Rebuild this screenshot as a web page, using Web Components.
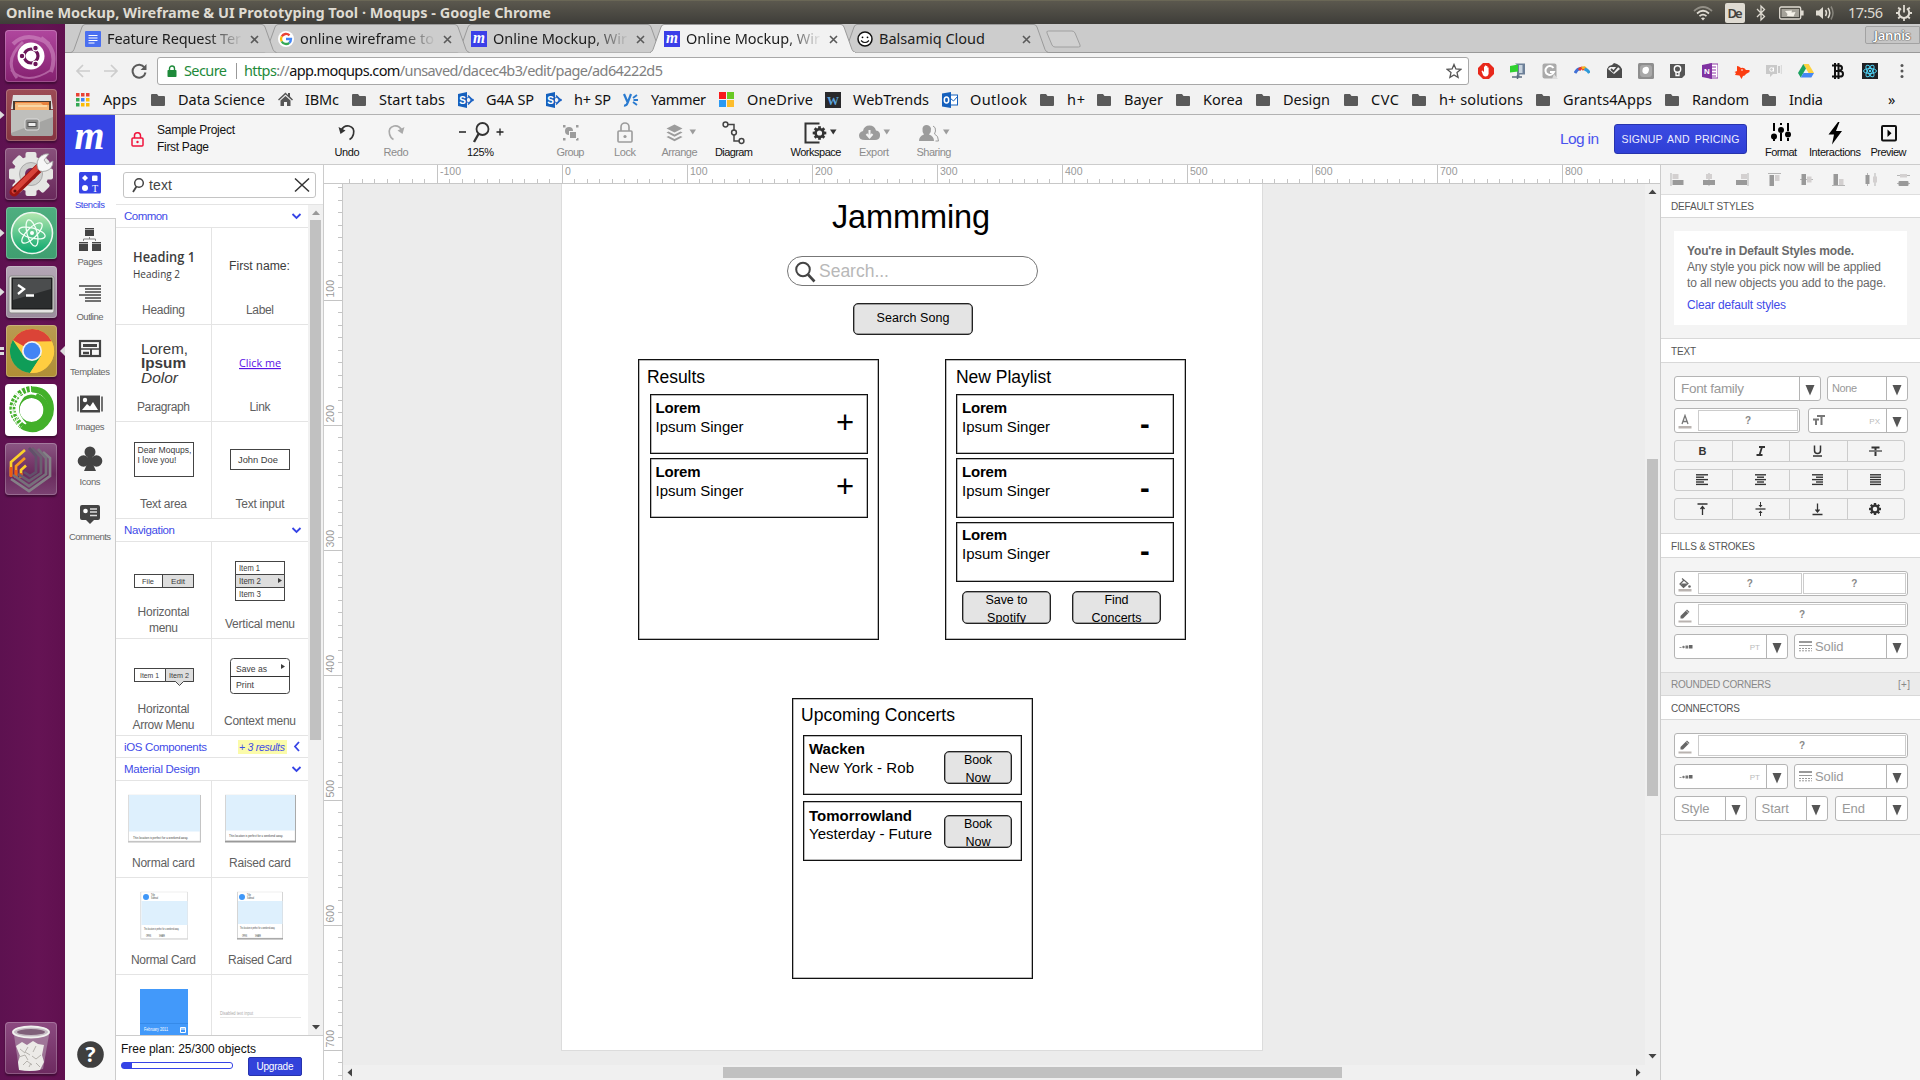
<!DOCTYPE html>
<html lang="en">
<head>
<meta charset="utf-8">
<title>Online Mockup, Wireframe &amp; UI Prototyping Tool · Moqups</title>
<style>
html,body{margin:0;padding:0;width:1920px;height:1080px;overflow:hidden;background:#f4f4f4;font-family:"Liberation Sans",Arial,sans-serif;font-size:12px;color:#222}
desktop-shell{width:1920px;height:1080px}
</style>
</head>
<body>
<desktop-shell></desktop-shell>
<script>
const fitted = [];
const UB = `font-family:'Noto Sans','Open Sans',sans-serif`;
const T = (w, s, css = '') => `<fit-text w="${w}" style="${css}">${s}</fit-text>`;
const S = (w, h, inner, attrs = '') => `<svg width="${w}" height="${h}" viewBox="0 0 ${w} ${h}" ${attrs}>${inner}</svg>`;

function define(name, css, html) {
  customElements.define(name, class extends HTMLElement {
    constructor() {
      super();
      const root = this.attachShadow({ mode: 'open' });
      const t = document.createElement('template');
      t.innerHTML = `<style>*{box-sizing:border-box}:host{display:block;box-sizing:border-box}svg{display:block;flex:none}${css}</style>` +
        (typeof html === 'function' ? html(this) : html);
      root.append(t.content.cloneNode(true));
    }
  });
}

/* Single line of text, tracked so that it fills the given width. */
customElements.define('fit-text', class extends HTMLElement {
  constructor() {
    super();
    this.attachShadow({ mode: 'open' }).innerHTML =
      '<style>:host{display:block;white-space:nowrap;flex:none}span{display:inline-block;white-space:pre}</style><span><slot></slot></span>';
    fitted.push(this);
  }
  fit() {
    const w = parseFloat(this.getAttribute('w'));
    if (!w) return;
    const span = this.shadowRoot.querySelector('span');
    const n = this.textContent.length - 1;
    const nat = span.getBoundingClientRect().width;
    this.style.width = w + 'px';
    if (n > 0) span.style.letterSpacing = ((w - nat) / n).toFixed(3) + 'px';
  }
});

/* ---------- system bar ---------- */
define('os-bar', `
:host{height:24px;background:linear-gradient(#5b584e,#3e3d39);border-top:1px solid #6a6756;color:#dfdbd2;display:flex;align-items:center;padding:0 0 0 6px;${UB}}
.r{margin-left:auto;display:flex;align-items:center;height:24px}
.de{width:20px;height:20px;border-radius:2px;background:#dfdbd2;color:#45433d;display:flex;align-items:center;justify-content:center;font-weight:600;font-size:13px}
`, `${T(545, 'Online Mockup, Wireframe &amp; UI Prototyping Tool · Moqups - Google Chrome', 'font-size:14.5px;font-weight:700;line-height:22px;margin-top:-1px')}
<div class="r">
${S(20, 20, `<g fill="none" stroke="#dfdbd2" stroke-width="1.7"><path d="M1 8Q10 0 19 8" opacity=".45"/><path d="M4 10.5Q10 5 16 10.5"/><path d="M6.5 13.2Q10 10 13.5 13.2"/></g><path d="M8 15.2Q10 13.6 12 15.2L10 17.5Z" fill="#dfdbd2"/>`)}
<span style="width:12px"></span><span class="de">${T(15, 'De')}</span><span style="width:10px"></span>
${S(12, 18, `<path d="M2 5L9.500 12.500L6 16V2L9.500 5.500L2 13" fill="none" stroke="#dfdbd2" stroke-width="1.3"/>`)}
<span style="width:12px"></span>
${S(25, 14, `<rect x=".7" y="1" width="21" height="12" rx="1.500" fill="none" stroke="#dfdbd2" stroke-width="1.3"/><rect x="22" y="4.500" width="2.600" height="5" fill="#dfdbd2"/><rect x="2.500" y="3" width="17.500" height="8" fill="#a5a299"/><path d="M6 5l7-.5-.5 2 4-.5-2 4.500-6.500-.5.5-2z" fill="#f4f1e8"/>`)}
<span style="width:11px"></span>
${S(20, 18, `<path d="M1 6.500h3l4-3.500v12l-4-3.500H1z" fill="#dfdbd2"/><g fill="none" stroke="#dfdbd2" stroke-width="1.500"><path d="M10.500 6q2 3 0 6"/><path d="M13 4q3.500 5 0 10"/><path d="M16 2.500q4 6.500 0 13" opacity=".4"/></g>`)}
<span style="width:13px"></span>${T(35, '17:56', 'font-size:14.500px;line-height:22px;margin-top:-1px')}<span style="width:13px"></span>
${S(16, 17, `<g fill="none" stroke="#dfdbd2"><path d="M5 4.500a5.200 5.200 0 1 0 6 0" stroke-width="2"/><path d="M8 1v7.500" stroke-width="1.800"/><path d="M0 9h2.500M13.500 9H16M2.200 14.500l1.800-1.800M13.800 14.500L12 12.700M8 14v3M2.200 3.500L4 5.300M13.800 3.500L12 5.300" stroke-width="1.800"/></g>`)}
<span style="width:8px"></span></div>`);

/* ---------- launcher ---------- */
const L = {
ubuntu: ['linear-gradient(#b0479e,#84206f)', `<g fill="none" stroke="#d79bcb" opacity=".5"><path d="M8 14Q22 0 44 14" stroke-width="4"/><path d="M12 48Q-2 30 18 12" stroke-width="3"/><path d="M46 42Q54 20 36 8" stroke-width="4"/><path d="M6 40q16 16 40 0" stroke-width="2"/></g><circle cx="26" cy="26" r="13.500" fill="#fff"/><circle cx="26" cy="26" r="7" fill="none" stroke="#6b1559" stroke-width="3.200"/><g fill="#6b1559" stroke="#fff" stroke-width="1.200"><circle cx="17" cy="26" r="2.800"/><circle cx="30.500" cy="18" r="2.800"/><circle cx="30.500" cy="34" r="2.800"/></g>`],
files: ['linear-gradient(#9c4b55,#853540)', `<path d="M7 6h38l2 14H5z" fill="#dcdcdc"/><path d="M7 12h38v12H7z" fill="#4b3b32"/><path d="M9 13h34v9H9z" fill="#e9813c"/><path d="M11 14h24l2 2h6v6H9v-7z" fill="#f7b778"/><path d="M12 17h29" stroke="#fbe2b5" stroke-width="1.500"/><path d="M5 21h42v24q0 2-2 2H7q-2 0-2-2z" fill="#a5a5a3"/><path d="M5 21h42v7L5 44z" fill="#bfbfbc"/><rect x="19" y="30" width="14" height="11" rx="2" fill="#8b8b89" stroke="#ddd"/><rect x="22" y="33.500" width="8" height="4" fill="#eee" stroke="#555"/>`],
settings: ['linear-gradient(#88507b,#69285b)', `<g transform="translate(26 26)"><g fill="#e6e6e4">${[0,45,90,135].map(a=>`<rect x="-5.500" y="-22" width="11" height="44" rx="2" transform="rotate(${a})"/>`).join('')}<circle r="17.500"/></g><circle r="11.500" fill="#cfcfcd" stroke="#aaa"/><circle r="6" fill="#712c61"/></g><path d="M9 44L34 20" stroke="#9d1512" stroke-width="9" stroke-linecap="round"/><path d="M9 43L33 19" stroke="#d8433a" stroke-width="5" stroke-linecap="round"/><path d="M33 21q-3-8 3-13 4-3 8-2l-5 6 3 4 6-3q0 8-7 10-4 1-6 0z" fill="#f6f6f6" stroke="#999" stroke-width=".8"/><circle cx="10" cy="43" r="1.600" fill="#5c0d0b"/>`],
atom: ['linear-gradient(#4fae80,#3f9f70)', `<defs><linearGradient id="ag" x2="0" y2="1"><stop offset="0" stop-color="#b5e8b0"/><stop offset="1" stop-color="#08a66c"/></linearGradient></defs><circle cx="26" cy="26" r="20.500" fill="url(#ag)" stroke="#eef8f0" stroke-width="1.600"/><g fill="none" stroke="#f2fff6" stroke-width="1.300" transform="translate(26 26)"><ellipse rx="13.500" ry="5" transform="rotate(15)"/><ellipse rx="13.500" ry="5" transform="rotate(75)"/><ellipse rx="13.500" ry="5" transform="rotate(135)"/></g><circle cx="26" cy="26" r="2" fill="#fff"/>`],
term: ['linear-gradient(#b5a7b6,#9b8c9d)', `<rect x="3" y="10" width="45" height="37" rx="2" fill="#e4e4e2" stroke="#8a8a88"/><rect x="6" y="12" width="40" height="31" fill="#2b2d2e" stroke="#111"/><path d="M7 13h38v10L7 34z" fill="#4b4d4e"/><path d="M12 19l6 4-6 5" fill="none" stroke="#fff" stroke-width="2.300"/><path d="M20 29.500h8" stroke="#fff" stroke-width="2.300"/>`],
chrome: ['linear-gradient(#b99b52,#b08f35)', `<circle cx="26" cy="26" r="22" fill="#ffcd40"/><path d="M26 26L6.900 15A22 22 0 0 1 45.800 16.500H26z" fill="#db4437"/><path d="M6.900 15A22 22 0 0 0 24 47.900L35 31 17 30z" fill="#0f9d58"/><path d="M45.800 16.500A22 22 0 0 1 24 47.900L35.500 30.500 32 17z" fill="#ffcd40"/><circle cx="26" cy="26" r="10" fill="#f1f1f1"/><circle cx="26" cy="26" r="8.300" fill="#4285f4"/>`],
anaconda: ['#fff', `<circle cx="26.500" cy="26" r="14.800" fill="none" stroke="#43b02a" stroke-width="5.500"/><circle cx="26.500" cy="26" r="14.500" fill="none" stroke="#43b02a" stroke-width="5" /><path d="M18 43Q1 26 16 9Q24 3 33 7" fill="none" stroke="#fff" stroke-width="10"/><g fill="none" stroke="#43b02a"><path d="M17 42Q0 26 13 11" stroke-width="6" stroke-dasharray="2.600 1.300"/><path d="M14 10Q20 5 27 5" stroke-width="6" stroke-dasharray="3 1.400"/></g><path d="M27 5.500Q40 5 45 18 49 33 36 43 27 48 17 42" fill="none" stroke="#43b02a" stroke-width="6"/><path d="M15 43Q-1 27 15 9M18 9l-7 5 4 3-6 4 4 4-6 3 7 3-3 5" fill="none" stroke="#fff" stroke-width=".9"/>`],
mosaic: ['linear-gradient(#8b5683,#6a2a5d 60%,#7b4272)', `<g fill="none" stroke-width="2.700"><path d="M6 33V19L20 7" stroke="#fbd12b"/><path d="M11 35V23L20 15" stroke="#fa9b1c"/><path d="M16 35V27L21 22.500" stroke="#fbd12b"/><path d="M6 34V24M11 35V27M16 35V30" stroke="#ef5a12"/><path d="M6 36l18 12 21-15V15L38 9" stroke="#858087"/><path d="M8 32l16 11 17-12V15L33 6" stroke="#76707a"/><path d="M13 31l11 7 12-8V14L27 5" stroke="#6b5f70"/><path d="M19 29l6 4 6-4V13l-7-8" stroke="#62506a"/></g>`],
trash: ['linear-gradient(#8c4a80,#6d2a60)', `<path d="M9 13l5 34q12 4 24 0l6-34z" fill="#b49cb0" opacity=".6"/><g fill="#eceae7"><path d="M11 24l6-4 5 3 6-4 5 3 6 1-2 10 2 7-4 8q-10 2-21 0l-1-8 2-6z"/></g><path d="M15 27l5 4M23 25l-3 5 5 3M31 24l-3 6M14 35l6-2 3 5M27 34l4 3 5-4M18 43l4-4 5 4M31 41l4 4M24 45l2-4" stroke="#b5b2ad" fill="none"/><ellipse cx="26" cy="10" rx="18" ry="5.500" fill="#c6bcc4" stroke="#f0f0ee" stroke-width="2"/><ellipse cx="26" cy="10" rx="14" ry="3" fill="#80607a"/>`]
};
define('launcher-tile', `
:host{width:65px;height:52px;display:flex;align-items:center}
.t{width:52px;height:52px;border-radius:4px;overflow:hidden;box-shadow:inset 0 0 0 1px rgba(255,255,255,.22),0 2px 2px rgba(0,0,0,.35);margin-left:-1px}
.l{width:6px}.r{width:6px;margin-left:2px}
.t{margin-left:-.5px}
`, h => {
  const k = h.getAttribute('icon'), run = h.hasAttribute('run'), act = h.hasAttribute('active');
  return `<div class="l">${run ? S(6, 10, '<path d="M0 1l4.500 4L0 9z" fill="#ddd"/>') : act ? S(6, 10, '<path d="M0 1h4v3H0zM0 6h4v3H0z" fill="#ddd"/>') : ''}</div>
<div class="t" style="background:${L[k][0]}">${S(52, 52, L[k][1])}</div><div class="r">${act ? S(6, 10, '<path d="M6 0L1 5l5 5z" fill="#ddd"/>') : ''}</div>`;
});
define('app-launcher', `:host{width:65px;background:linear-gradient(90deg,#5d1150,#651354 60%,#60104f);display:flex;flex-direction:column;gap:7px;padding:6px 0}.sp{flex:1}`,
`<launcher-tile icon="ubuntu"></launcher-tile><launcher-tile icon="files" run></launcher-tile><launcher-tile icon="settings"></launcher-tile><launcher-tile icon="atom" run></launcher-tile><launcher-tile icon="term" run></launcher-tile><launcher-tile icon="chrome" active></launcher-tile><launcher-tile icon="anaconda"></launcher-tile><launcher-tile icon="mosaic"></launcher-tile><div class="sp"></div><launcher-tile icon="trash"></launcher-tile>`);

/* ---------- browser chrome ---------- */
const M = `<rect width="16" height="16" fill="#3b3fe8"/><text x="8" y="12" text-anchor="middle" font-family="Liberation Serif" font-style="italic" font-weight="700" font-size="17" textLength="12" lengthAdjust="spacingAndGlyphs" fill="#fff">m</text>`;
const fav = {
doc: `<rect width="16" height="16" rx="1" fill="#4a6ff0"/><path d="M3.500 4.500h9M3.500 7h9M3.500 9.500h9M3.500 12h6" stroke="#fff" stroke-width="1.200"/>`,
g: `<circle cx="8" cy="8" r="8" fill="#fff"/><g fill="none" stroke-width="2.300"><path d="M11.500 4.300A5 5 0 0 0 3.700 5.500" stroke="#ea4335"/><path d="M3.700 5.500A5 5 0 0 0 3.700 10.500" stroke="#fbbc05"/><path d="M3.700 10.500A5 5 0 0 0 11.300 11.800" stroke="#34a853"/><path d="M11.300 11.800A5 5 0 0 0 13 8H8" stroke="#4285f4"/></g>`,
m: M,
b: `<circle cx="8" cy="8" r="7" fill="#fff" stroke="#111" stroke-width="1.500"/><circle cx="5.500" cy="6.300" r=".9"/><circle cx="10.500" cy="6.300" r=".9"/><path d="M4 9.500q4 4 8 0" fill="none" stroke="#111" stroke-width="1.100"/>`
};
define('browser-tab', `
:host{position:relative;width:193px;height:29px;display:flex;align-items:center;padding:0 0 0 14px;flex:none;font-size:14.500px;color:#1c1c1c;${UB}}
.bg{position:absolute;left:0;top:0;z-index:-1}
.t{width:134px;overflow:hidden;margin:-1px 0 0 6px;line-height:22px;-webkit-mask-image:linear-gradient(90deg,#000 100px,transparent 136px)}
.t.full{-webkit-mask-image:none}
`, h => {
  const a = h.hasAttribute('active'), w = h.getAttribute('w'), full = h.hasAttribute('full');
  return `<svg class="bg" width="208" height="29" viewBox="0 0 208 29"><path d="M0 28.500Q2 28 3 25.500L11 3Q12 .5 14 .5H191Q193 .5 194 3L202 25.500Q203 28 205.500 28.500" fill="${a ? '#f2f2f2' : '#cdcdcd'}" stroke="#9a9a9a"/>${a ? '<path d="M1 28.500h204" stroke="#f2f2f2"/>' : ''}</svg>
${S(16, 16, fav[h.getAttribute('icon')], 'style="margin-top:1px"')}<div class="t ${full ? 'full' : ''}"><fit-text w="${w}"><slot></slot></fit-text></div>
${S(9, 9, '<path d="M1 1l7 7M8 1L1 8" stroke="#5a5a5a" stroke-width="1.600"/>', 'style="margin-left:8.5px;margin-top:1px"')}`;
});
define('tab-strip', `
:host{height:29px;background:#cbcbcb;display:flex;padding-left:6px;border-bottom:1px solid #999;position:relative;z-index:0}
browser-tab{z-index:1;isolation:isolate}
browser-tab:nth-of-type(1){z-index:5}browser-tab:nth-of-type(2){z-index:4}browser-tab:nth-of-type(3){z-index:3}browser-tab[active]{z-index:9}
.new{margin:6px 0 0 10px}
.user{margin-left:auto;width:55px;height:18px;margin-top:2px;border:1px solid #a2a2a2;border-radius:2px 0 0 2px;background:#c6c6c6;color:#fff;font-size:13px;font-weight:600;display:flex;align-items:center;justify-content:center;text-shadow:0 0 1px #444,0 0 1px #444,0 0 1px #555;${UB}}
`, `<browser-tab icon="doc" w="134">Feature Request Ter</browser-tab><browser-tab icon="g" w="134">online wireframe to</browser-tab><browser-tab icon="m" w="134">Online Mockup, Wir</browser-tab><browser-tab icon="m" w="134" active>Online Mockup, Wir</browser-tab><browser-tab icon="b" w="106" full>Balsamiq Cloud</browser-tab>
<div class="new">${S(36, 20, '<path d="M1 3Q0 1 2.500 1H26Q28 1 29 3L34 15Q35 17 32.500 17H9Q7 17 6 15Z" fill="#d0d0d0" stroke="#a0a0a0"/>')}</div>
<div class="user">${T(37, 'Jannis')}</div>`);

const ext = [
`<path d="M5 0h6l5 5v6l-5 5H5l-5-5V5z" fill="#e8291c"/><path d="M5 12L3.500 8l1-.5L6 9V3.500h1V8V2.500h1.200V8V3h1.200v5.500V4.500h1.200V11q-1 3-3.500 2.500-1.500-.3-2.100-1.500z" fill="#fff"/>`,
`<path d="M5 .5h10v11H9.500v3H7V2" fill="#6d8098"/><rect x="9" y="2" width="3.500" height="8" fill="#c8d3de"/><path d="M0 3l8-1.500v7L0 9.500z" fill="#2fd12f"/><path d="M2 14h10M7.500 12v4" stroke="#5c6c80" stroke-width="1.500"/>`,
`<rect x=".5" y=".5" width="14" height="15" rx="2" fill="#aaa"/><path d="M11.500 5A4.400 4.400 0 1 0 12 9H8" fill="none" stroke="#fff" stroke-width="2"/><path d="M12 11l4 5h-6z" fill="#ddd"/>`,
`<path d="M1 10Q4 5 7 6" stroke="#4171d6" stroke-width="3" fill="none"/><path d="M5 7Q8 3 10 7" stroke="#e8372c" stroke-width="3" fill="none"/><path d="M8 5.500Q11 3 12 6.500" stroke="#f5b31d" stroke-width="2.600" fill="none"/><path d="M10.500 6Q14 7 15.500 10" stroke="#2f9ad8" stroke-width="3" fill="none"/>`,
`<path d="M1 6l2-3 3-1 2-2 3 1 3 2 2 3v9H1z" fill="#4c4c4c"/><path d="M2 6l6 5 6-5-2-2H4z" fill="#f2f2f2"/><path d="M5 6l2.500 2.500L12 3" fill="none" stroke="#4c4c4c" stroke-width="1.800"/>`,
`<rect width="16" height="16" rx="1.500" fill="#8e8e8e"/><rect x="2" y="2" width="12" height="12" rx="3" fill="#a9a9a9"/><path d="M5 5q5-3 6 1 0 5-4 5-4-1-2-6z" fill="#fff"/>`,
`<path d="M0 1h15v11l-3 3H0z" fill="#555"/><circle cx="7.500" cy="6" r="3.200" fill="none" stroke="#fff" stroke-width="1.400"/><path d="M6 9v3.500h3V9" fill="none" stroke="#fff" stroke-width="1.300"/>`,
`<rect x="8" y="1" width="8" height="14" fill="#fff" stroke="#8e3ba6"/><path d="M10 4h4M10 7h4M10 10h4M10 13h4" stroke="#8e3ba6" stroke-width="1.200"/><path d="M0 2l10-2v16L0 14z" fill="#8032a2"/><text x="5" y="11" text-anchor="middle" font-size="8" font-weight="700" font-family="Liberation Sans" fill="#fff">N</text>`,
`<path d="M3 3q2 0 4 2 3-1 5 2h3.500v2L12 11q-1 2-3 2l-1.500 3-2-3.500L1 12l1-2-1.500-1L3 8z" fill="#fb3d11"/><circle cx="8" cy="7" r=".8" fill="#fff"/>`,
`<path d="M0 2h11v9H7l-3 3v-3H0zM12 3h2v7h-2z" fill="#c9c9c9"/><path d="M15.300 2v9" stroke="#d5d5d5"/><circle cx="5.500" cy="6.500" r="1.800" fill="none" stroke="#fff"/><path d="M7.500 4.500v4" stroke="#fff"/>`,
`<path d="M5.300 1h5.400L16 10h-5.400z" fill="#fdd23f"/><path d="M5.300 1L0 10l2.700 4.500 5.300-9z" fill="#1ba261"/><path d="M2.700 14.500L5.400 10H16l-2.700 4.500z" fill="#4688f4"/>`,
`<path d="M5 0v16M8.500 0v16M2 2.500h7q3 .2 3 2.600T9 8H5h5q3 .3 3 2.900T10 13.500H2" fill="none" stroke="#111" stroke-width="2"/>`,
`<rect width="16" height="16" fill="#1f2024"/><g fill="none" stroke="#4fd2f5" transform="translate(8 8)"><ellipse rx="6.500" ry="2.500"/><ellipse rx="6.500" ry="2.500" transform="rotate(60)"/><ellipse rx="6.500" ry="2.500" transform="rotate(120)"/></g><circle cx="8" cy="8" r="1.200" fill="#4fd2f5"/>`,
`<g fill="#555"><circle cx="8" cy="2.500" r="1.500"/><circle cx="8" cy="8" r="1.500"/><circle cx="8" cy="13.500" r="1.500"/></g>`
];
define('nav-bar', `
:host{height:36px;background:#f2f2f2;display:flex;align-items:center;padding:0 10px 0 10px;${UB};font-size:14.500px}
.nav{display:flex;width:82px}.nav svg{margin-right:12px}
.box{width:1312px;height:28px;background:#fff;border:1px solid #a8a8a8;border-radius:3px;display:flex;align-items:center;padding-left:9px}
.box fit-text{margin-top:-2px}
.ext{display:flex;gap:16px;margin-left:auto}
`, `<div class="nav">${S(16, 16, '<path d="M15 8H2M8 2L2 8l6 6" fill="none" stroke="#cdcdcd" stroke-width="1.700"/>')}${S(16, 16, '<path d="M1 8h13M8 2l6 6-6 6" fill="none" stroke="#cdcdcd" stroke-width="1.700"/>')}${S(16, 16, '<path d="M13.500 4.500A6.500 6.500 0 1 0 14.500 9.500" fill="none" stroke="#5a5a5a" stroke-width="2"/><path d="M15.500 1v6H9.500z" fill="#5a5a5a"/>')}</div>
<div class="box">${S(10, 12, '<rect x=".5" y="5" width="9" height="7" rx=".8" fill="#1e8a3a"/><path d="M2.500 5.500V3.500a2.500 2.500 0 0 1 5 0v2" fill="none" stroke="#1e8a3a" stroke-width="1.400"/>')}${T(43, 'Secure', 'margin-left:7px;color:#1e8a3a')}<div style="width:1px;height:16px;background:#999;margin:0 7px 0 9px"></div>
${T(419, '<span style="color:#1e8a3a">https</span><span style="color:#808080">://</span><span style="color:#111">app.moqups.com</span><span style="color:#808080">/unsaved/dacec4b3/edit/page/ad64222d5</span>')}
${S(16, 16, '<path d="M8 1.500l1.900 4.500 4.800.4-3.700 3.200 1.100 4.800L8 11.900l-4.100 2.500L5 9.600 1.300 6.400 6.100 6z" fill="none" stroke="#555" stroke-width="1.300"/>', 'style="margin-left:auto;margin-right:6px"')}</div>
<div class="ext">${ext.map(e => S(16, 16, e)).join('')}</div>`);

const bmI = {
apps: S(14, 14, [0,1,2].map(r => [0,1,2].map(c => `<rect x="${c*5}" y="${r*5}" width="3.500" height="3.500" fill="${[['#ea4335','#ea4335','#ea4335'],['#34a853','#4285f4','#fbbc05'],['#34a853','#fbbc05','#fbbc05']][r][c]}"/>`).join('')).join('')),
f: S(15, 14, '<path d="M0 2Q0 1 1 1h5l1.500 2H13q1 0 1 1v8q0 1-1 1H1q-1 0-1-1z" fill="#5a5a5a"/>'),
home: S(15, 15, '<path d="M7.500 .5L0 7.500l1 1 6.500-6 6.500 6 1-1-3-3V1h-2v2z" fill="#555"/><path d="M2.500 8.500l5-4.500 5 4.500V14H9v-4H6v4H2.500z" fill="#555"/>'),
sp: S(16, 16, '<path d="M10 3.500l4.500 4.500L10 12.500" fill="none" stroke="#1b62c4" stroke-width="1.500"/><circle cx="10.500" cy="8" r="2.500" fill="none" stroke="#1b62c4"/><circle cx="14.500" cy="8" r="1.300" fill="#1b62c4"/><path d="M0 2l9-2v16l-9-2z" fill="#1560bd"/><text x="4.600" y="11.500" text-anchor="middle" font-size="10" font-weight="700" font-family="Liberation Sans" fill="#fff">S</text>'),
ya: S(16, 16, '<path d="M1 2l3.500 8M8 2L4.500 11Q3.500 14 1 13.500" fill="none" stroke="#2a7bd0" stroke-width="2.200"/><path d="M10 6l4-3M10.500 8H15M10 10l4 3" stroke="#2a7bd0" stroke-width="1.800"/>'),
ms: S(15, 15, '<path d="M0 0h7v7H0z" fill="#f8191b"/><path d="M8 0h7v7H8z" fill="#69c924"/><path d="M0 8h7v7H0z" fill="#2b99f3"/><path d="M8 8h7v7H8z" fill="#fdbd2c"/>'),
wt: S(16, 16, '<rect width="16" height="16" fill="#29292b"/><text x="8" y="12.500" text-anchor="middle" font-size="12" font-weight="700" font-family="Liberation Serif" fill="#5ba3dc">W</text>'),
ol: S(16, 16, '<rect x="7" y="3" width="8.500" height="10" fill="#fff" stroke="#1560bd"/><path d="M8 6l3.500 3L16 4" fill="none" stroke="#1560bd"/><path d="M0 1.500L9 0v16l-9-1.500z" fill="#1560bd"/><ellipse cx="4.500" cy="8" rx="2.200" ry="3" fill="none" stroke="#fff" stroke-width="1.500"/>')
};
const bms = [['apps','Apps',76,103,137],['f','Data Science',151,178,265],['home','IBMc',278,305,339],['f','Start tabs',352,379,445],['sp','G4A SP',458,486,534],['sp','h+ SP',546,574,611],['ya','Yammer',623,651,706],['ms','OneDrive',719,747,813],['wt','WebTrends',825,853,929],['ol','Outlook',942,970,1027],['f','h+',1040,1067,1085],['f','Bayer',1097,1124,1163],['f','Korea',1176,1203,1243],['f','Design',1256,1283,1330],['f','CVC',1344,1371,1399],['f','h+ solutions',1412,1439,1523],['f','Grants4Apps',1536,1563,1652],['f','Random',1665,1692,1749],['f','India',1762,1789,1823],['','»',1858,1888,1897]];
define('bookmark-bar', `:host{height:26px;background:#f2f2f2;border-bottom:1px solid #b2b2b2;padding:0 0 4px 11px;display:flex;align-items:center;${UB};font-size:14.500px;color:#111;line-height:20px}.b{display:flex;align-items:center;flex:none}.i{flex:none}.b fit-text{margin-top:-2px}`,
bms.map((b, i) => `<div class="b" style="width:${bms[i+1] ? bms[i+1][2] - b[2] : 50}px"><div class="i" style="width:${b[3]-b[2]}px">${bmI[b[0]] || ''}</div>${T(b[4]-b[3], b[1])}</div>`).join(''));

/* ---------- editor header ---------- */
const gear = (cx, cy, r, c, hole) => `<g transform="translate(${cx} ${cy})" fill="${c}">${[0,45,90,135].map(a=>`<rect x="${-r*.2}" y="${-r}" width="${r*.4}" height="${2*r}" transform="rotate(${a})"/>`).join('')}<circle r="${r*.76}"/><circle r="${r*.38}" fill="${hole}"/></g>`;
const caretS = c => `<path d="M0 0h6.500l-3.250 5z" fill="${c}"/>`;
const hI = {
undo: S(24, 24, '<path d="M6 9.500Q9 4 14 5q6 1.500 4.500 8-1 4-4 5.500" fill="none" stroke="#333" stroke-width="1.600"/><path d="M3.500 6l2 7L10.500 9.500z" fill="#333"/>'),
redo: S(24, 24, '<path d="M18 9.500Q15 4 10 5q-6 1.500-4.500 8 1 4 4 5.500" fill="none" stroke="#aaa" stroke-width="1.600"/><path d="M20.500 6l-2 7L13.500 9.500z" fill="#aaa"/>'),
zoom: S(46, 24, '<path d="M1 11h7M38.500 11h7M42 7.500v7" stroke="#222" stroke-width="1.300"/><circle cx="24.500" cy="8" r="6" fill="none" stroke="#333" stroke-width="1.800"/><path d="M20.500 13l-4.500 8" stroke="#333" stroke-width="2.400"/>'),
group: S(24, 24, '<g fill="#9c9c9c"><rect x="4" y="4" width="2.500" height="2.500"/><rect x="17" y="4" width="2.500" height="2.500"/><rect x="4" y="17" width="2.500" height="2.500"/><rect x="17" y="17" width="2.500" height="2.500"/><circle cx="10" cy="10" r="4"/><rect x="10.500" y="10.500" width="7" height="7" stroke="#f5f5f5"/></g>'),
lock: S(24, 24, '<g fill="none" stroke="#9c9c9c" stroke-width="1.600"><rect x="5" y="10" width="14" height="11" rx="1"/><path d="M8 10V6a4 4 0 0 1 8 0v4"/></g><circle cx="12" cy="15.500" r="1.600" fill="#9c9c9c"/>'),
arrange: S(34, 24, `<g fill="#9c9c9c"><path d="M11.500 3.500l8 4-8 4-8-4z"/><path d="M3.500 11.500l2-1 6 3 6-3 2 1-8 4.200z"/><path d="M3.500 16l2-1 6 3 6-3 2 1-8 4.200z"/></g><g transform="translate(26.500 8.500)">${caretS('#9c9c9c')}</g>`),
diagram: S(26, 24, '<g fill="none" stroke="#444" stroke-width="1.500"><circle cx="4.500" cy="3.500" r="2.400"/><path d="M7 3.500h6v6"/><circle cx="13" cy="11.500" r="2.400"/><path d="M13 14v6h5"/><circle cx="20.500" cy="20" r="2.400"/></g>'),
work: S(34, 24, `<path d="M20.500 2.500H6.500v19h14" fill="none" stroke="#333" stroke-width="2"/>${gear(20.5,12,6.800,'#333','#f5f5f5')}<g transform="translate(31 8.500)">${caretS('#333')}</g>`, 'overflow="visible"'),
exp: S(34, 24, `<path d="M8 19Q2 19 2 14.500 2 11 6 10 7 4.500 12.500 4.500q5 0 6.500 5 4.500.5 4 5.500-.5 4-5 4z" fill="#9c9c9c"/><path d="M12.500 9v7M9.500 13l3 3.500 3-3.500" fill="none" stroke="#f5f5f5" stroke-width="2"/><g transform="translate(26.500 8.500)">${caretS('#9c9c9c')}</g>`),
share: S(34, 24, `<path d="M16 5q3 1 2.500 5l-1 3q4 1.500 4 7h-3" fill="none" stroke="#9c9c9c"/><path d="M2 20q0-5 5-6.500Q5 11 5.500 7.500 6 4 9.500 4T14 7.500Q14.500 11 12 13.500q5 1.500 5 6.500z" fill="#9c9c9c"/><g transform="translate(26 8.500)">${caretS('#9c9c9c')}</g>`),
format: S(24, 24, '<g stroke="#000" stroke-width="2"><path d="M5 2v20" stroke-dasharray="8 8 2 2"/><path d="M12 2v20" stroke-dasharray="2 8 8 8"/><path d="M19 2v20" stroke-dasharray="8 7 3 4"/></g><circle cx="5" cy="15.500" r="3"/><circle cx="12" cy="9" r="3"/><circle cx="19" cy="13.500" r="3"/>'),
inter: S(24, 24, '<path d="M15 1L5.500 13.500H11L9 23.500 19 10h-6L16.500 1z"/>'),
prev: S(24, 24, '<rect x="5" y="5" width="14" height="14.500" rx="1" fill="none" stroke="#111" stroke-width="2"/><path d="M10.500 8.500l4 3.800-4 3.800z"/>')
};
define('tool-button', `:host{width:60px;height:50px;display:flex;flex-direction:column;align-items:center;padding-top:6px;flex:none;color:#111;font-size:11px;margin:0 -30px}:host([off]){color:#8c8c8c}fit-text{line-height:15px}`,
h => `${hI[h.getAttribute('icon')]}<fit-text w="${h.getAttribute('w')}">${h.getAttribute('label')}</fit-text>`);
const tb = [['undo','Undo',25,347],['redo','Redo',25,396,1],['zoom','125%',27,480.5],['group','Group',28,570.5,1],['lock','Lock',22,625,1],['arrange','Arrange',36,679.5,1],['diagram','Diagram',38,734],['work','Workspace',51,816],['exp','Export',30,874,1],['share','Sharing',35,934,1]];
const tb2 = [['format','Format',32,1781],['inter','Interactions',52,1835],['prev','Preview',36,1888.5]];
const tools = (arr, from) => arr.map((b, i) => `<div style="width:${b[3] - (i ? arr[i-1][3] : from)}px;flex:none"></div><tool-button icon="${b[0]}" label="${b[1]}" w="${b[2]}" ${b[4] ? 'off' : ''}></tool-button>`).join('');
define('editor-header', `
:host{height:50px;background:#f5f5f5;border-bottom:1px solid #ccc;display:flex}
.logo{width:50px;height:50px;background:#3644e6;flex:none}
.lk{margin:17px 0 0 16px;width:26px}
.nm{width:138px;padding-top:7px;line-height:17px;font-size:12px;color:#111;flex:none}
.tools{display:flex;flex:none}
.login{margin:14px 0 0 0;font-size:15.500px;line-height:20px;color:#4a53ee}
.cta{width:133px;height:30px;margin:9px 0 0 15px;border-radius:3px;background:linear-gradient(#3a4ae2,#2f3fd6);border:1px solid #2733ad;color:#eef;font-size:10.500px;display:flex;align-items:center;justify-content:center;flex:none}
`, `<div class="logo">${S(50, 50, '<text x="24.500" y="34" text-anchor="middle" font-family="Liberation Serif" font-style="italic" font-weight="700" font-size="42" textLength="30" lengthAdjust="spacingAndGlyphs" fill="#fff">m</text>')}</div>
<div class="lk">${S(13, 15, '<g fill="none" stroke="#f0143c" stroke-width="1.500"><rect x="1" y="6" width="11" height="8" rx="1"/><path d="M3.500 6V4a3 3 0 0 1 6-.5V6"/></g><circle cx="6.500" cy="10" r="1.200" fill="#f0143c"/>')}</div>
<div class="nm">${T(78, 'Sample Project')}${T(52, 'First Page')}</div>
<div class="tools" style="width:665px">${tools(tb, 295)}</div>
<div style="width:600px;flex:none"></div>
<div class="login">${T(39, 'Log in')}</div><div class="cta">${T(118, 'SIGNUP AND PRICING', 'word-spacing:2px')}</div><div class="tools">${tools(tb2, 1747)}</div>`);

/* ---------- left rail ---------- */
const rI = {
Stencils: S(26, 24, '<rect x="2" y="1" width="22" height="21.500" rx="1.500" fill="#3644e6"/><path d="M8 4l3 3-3 3-3-3z" fill="#fff"/><rect x="15" y="4.500" width="5.500" height="5.500" rx="1" fill="#fff"/><circle cx="8" cy="17" r="3" fill="#fff"/><text x="18" y="20.500" text-anchor="middle" font-family="Liberation Serif" font-size="10" fill="#fff">T</text>'),
Pages: S(26, 26, '<g fill="#444"><path d="M8 2h9v8H8zM2 16h9v9H2zM15 16h9v9h-9z"/></g><path d="M8 3.500h9M2 17.500h9M15 17.500h9" stroke="#aaa"/><path d="M12.500 11v2M6.500 15v-2h12v2" fill="none" stroke="#888"/>'),
Outline: S(26, 22, '<path d="M2 3h22M8 6h16M8 9h16M2 12h22M8 15h16M8 18h16" stroke="#444" stroke-width="1.700"/>'),
Templates: S(26, 22, '<rect x="3" y="3" width="20" height="15" fill="none" stroke="#444" stroke-width="2.200"/><path d="M6 7.500h14" stroke="#444" stroke-width="3"/><path d="M3 11h20" stroke="#444" stroke-width="1.500"/><path d="M6 15h6" stroke="#444" stroke-width="2.500"/><path d="M14 11v7" stroke="#444" stroke-width="2"/>'),
Images: S(26, 22, '<path d="M1 3.500v15M25 3.500v15" stroke="#444" stroke-width="1.500"/><rect x="3" y="2.500" width="20" height="17" fill="#444"/><circle cx="8" cy="7" r="2.200" fill="#fff"/><path d="M5 17l5-6 3 2.500 3-4.500 5 8z" fill="#fff"/>'),
Icons: S(26, 28, '<g fill="#444"><circle cx="13" cy="7" r="5.500"/><circle cx="6.500" cy="16" r="5.800"/><circle cx="19.500" cy="16" r="5.800"/><path d="M11 8h4v9l4 9H7l4-9z"/></g>'),
Comments: S(26, 24, '<path d="M5 3h16q2 0 2 2v11q0 2-2 2h-4l-4 4-4-4H5q-2 0-2-2V5q0-2 2-2z" fill="#444"/><circle cx="8.500" cy="9" r="2.300" fill="#fff"/><path d="M13 7h7M13 10h7M13 13.500h7" stroke="#ddd" stroke-width="1.400"/>')
};
define('rail-item', `:host{height:55px;width:50px;display:flex;flex-direction:column;align-items:center;font-size:9.500px;color:#666;flex:none}.i{height:34px;display:flex;align-items:center;margin-top:3px}:host([on]){background:#fff;color:#3644e6;height:54px;border-bottom:1px solid #ccc;padding-right:1px}:host([on]) .i{margin-top:3px;height:30px}fit-text{line-height:12px}:host([on]) fit-text{margin-top:1px}`,
h => { const n = h.getAttribute('name'); return `<div class="i">${rI[n]}</div><fit-text w="${h.getAttribute('w')}">${n}</fit-text>`; });
define('side-rail', `:host{width:51px;background:#f8f8f8;border-right:1px solid #ccc;display:flex;flex-direction:column;flex:none}rail-item[on]{width:51px}.h{margin:auto 0 12px 11.5px}`,
`<rail-item name="Stencils" w="30" on></rail-item><rail-item name="Pages" w="25"></rail-item><rail-item name="Outline" w="27"></rail-item><rail-item name="Templates" w="40"></rail-item><rail-item name="Images" w="29"></rail-item><rail-item name="Icons" w="21"></rail-item><rail-item name="Comments" w="42"></rail-item>
<div class="h">${S(27, 27, '<circle cx="13.500" cy="13.500" r="13.300" fill="#3f3f3f"/><text x="13.500" y="21" text-anchor="middle" font-family="Open Sans" font-weight="700" font-size="21" fill="#fff">?</text>')}</div>`);

/* ---------- stencils ---------- */
const tx = (x, y, s, w, t, a = '') => `<text x="${x}" y="${y}" font-size="${s}" textLength="${w}" lengthAdjust="spacingAndGlyphs" ${a}>${t}</text>`;
const box = (x, y, w, h, a = '') => `<rect x="${x+.5}" y="${y+.5}" width="${w}" height="${h}" fill="#fff" stroke="#444" ${a}/>`;
const blue = '#def0fd';
const cards = [[
['Heading',43, tx(17,34,13.5,62,'Heading 1','font-family="Open Sans" font-weight="600"') + tx(17,50,11,47,'Heading 2','font-family="Open Sans"')],
['Label',28, tx(17,42,12,61,'First name:')],
['Paragraph',53, tx(25,29,14.5,47,'Lorem,') + tx(25,43,14.5,45,'Ipsum','font-weight="700"') + tx(25,58,14.5,37,'Dolor','font-style="italic"')],
['Link',21, tx(27,42,11.5,42,'Click me','font-family="Open Sans" fill="#5a12e6" text-decoration="underline"')],
['Text area',47, box(18,20,59,34) + tx(21.5,31,8.5,54,'Dear Moqups,') + tx(21.5,41,8.5,39,'I love you!')],
['Text input',49, box(18,27,59,20) + tx(26,41,9.5,40,'John Doe')]
],[
['Horizontal|menu',[52,29], box(18,32,59,13) + `<rect x="46.500" y="32.500" width="31" height="13" fill="#dedede" stroke="#444"/>` + tx(26,42,8,12,'File') + tx(55,42,8,14,'Edit')],
['Vertical menu',70, box(23,19,49,39) + `<path d="M23.500 32.500h49v13h-49z" fill="#dedede" stroke="#444"/><path d="M66 36l4 2.500-4 2.500z"/>` + tx(27,28.5,8.5,21,'Item 1') + tx(27,41.5,8.5,22,'Item 2') + tx(27,55,8.5,22,'Item 3')],
['Horizontal|Arrow Menu',[52,62], box(18,29,59,13) + `<path d="M49.500 29.500h28v13h-10l-4 4-4-4h-10z" fill="#dedede" stroke="#444"/>` + tx(24,39,8,19,'Item 1') + tx(53,39,8,20,'Item 2')],
['Context menu',72, box(18,19,59,35,'rx="3"') + `<path d="M18 37.500h60" stroke="#333"/><path d="M69 25l4 2.500-4 2.500z"/>` + tx(24,32.5,9,31,'Save as') + tx(24,48.5,9,18,'Print')]
],[
['Normal card',63, `<rect x="12" y="14" width="73" height="47.500" fill="#bbb"/><rect x="12.500" y="14" width="71.500" height="46" fill="#fff" stroke="#ddd" stroke-width=".5"/><rect x="13" y="14" width="71" height="36.500" fill="${blue}"/>` + tx(17,57.5,4,55,'This location is perfect for a weekend away.')],
['Raised card',62, `<rect x="13" y="14" width="71" height="47.500" fill="#999"/><rect x="13.500" y="14" width="69.500" height="45.500" fill="#fff" stroke="#ddd" stroke-width=".5"/><rect x="14" y="14" width="69" height="35.500" fill="${blue}"/>` + tx(17,56,4,54,'This location is perfect for a weekend away.')],
['Normal Card',65, `<rect x="24.500" y="14" width="47.500" height="47.500" fill="#ccc"/><rect x="25" y="14" width="46.500" height="46.500" fill="#fff" stroke="#ddd" stroke-width=".5"/><circle cx="30" cy="19" r="3" fill="#3f97f8"/><rect x="25.500" y="23" width="46" height="24" fill="${blue}"/>` + tx(35,18,3,4,'Title') + tx(35,21,3,7,'Subhead') + tx(28,52,3.2,35,'This location is perfect for a weekend away.') + tx(30,59,3,5,'OPEN') + tx(43,59,3,6,'SHARE')],
['Raised Card',64, `<rect x="25" y="14" width="46" height="47.500" fill="#999"/><rect x="25.500" y="14" width="45" height="46" fill="#fff" stroke="#ddd" stroke-width=".5"/><circle cx="30" cy="19" r="3" fill="#3f97f8"/><rect x="26" y="23" width="44.500" height="23" fill="${blue}"/>` + tx(35,18,3,4,'Title') + tx(35,21,3,7,'Subhead') + tx(28,51,3.2,35,'This location is perfect for a weekend away.') + tx(30,58.5,3,5,'OPEN') + tx(43,58.5,3,6,'SHARE')],
['',0, `<rect x="24" y="14" width="48" height="60" fill="#4299fa"/><path d="M24 48.500h48" stroke="#358ae9"/>` + tx(28,56,4.5,24,'February 2011','fill="#fff"') + '<path d="M64.500 52.500h5v5h-5zM64.500 54h5" fill="none" stroke="#fff"/>'],
['',0, tx(8,40,4.5,33,'Disabled text input','fill="#aaa"') + '<path d="M8 42.500h81" stroke="#ddd" stroke-width=".7"/>']
]];
const cell = c => {
  const ls = c[0].split('|'), ws = [].concat(c[1]);
  return `<div class="c">${S(95, 74, c[2], 'fill="#3c3c3c" font-family="Liberation Sans"')}<div class="lb" style="margin-top:${ls.length > 1 ? -12 : 0}px">${ls[0] ? ls.map((l, i) => T(ws[i], l)).join('') : ''}</div></div>`;
};
const chev = (d = 'M1.500 3l4 4 4-4') => S(11, 11, `<path d="${d}" fill="none" stroke="#3644e6" stroke-width="1.800"/>`);
define('stencil-group', `
.hd{display:flex;align-items:center;font-size:11.500px;color:#3f4be8;padding:0 6px 0 8px;border-bottom:1px solid #e4e4e4}
.hd svg{margin-left:auto;}
.tag{margin-left:auto;background:#fbfbaa;font-style:italic;height:14px;width:49px;font-size:10.500px;line-height:14px;padding-left:1px}
.tag+svg{margin-left:4px}
.g{display:grid;grid-template-columns:95px 96px;gap:1px;background:#e4e4e4;border-bottom:1px solid #e4e4e4}
.c{background:#fff;height:96px;overflow:hidden}
.lb{display:flex;flex-direction:column;align-items:center;line-height:16px;font-size:12px;color:#606060}
`, h => {
  const i = h.getAttribute('data'), hh = h.getAttribute('h') || 23;
  return `<div class="hd" style="height:${hh}px">${T(h.getAttribute('w'), h.getAttribute('name'))}${i === null ? `<div class="tag">${T(46, '+ 3 results')}</div>${chev('M8 1L4 5.500 8 10')}` : chev()}</div>${i === null ? '' : `<div class="g">${cards[i].map(cell).join('')}</div>`}`;
});
define('stencil-panel', `
:host{width:208px;background:#fff;border-right:1px solid #ccc;display:flex;flex-direction:column;flex:none}
.s{height:40px;padding:7px 7px 0 7px;border-bottom:1px solid #e4e4e4;flex:none}
.in{height:26px;border:1px solid #c4c4c4;border-radius:3px;display:flex;align-items:center;padding:0 5px 0 7px;font-size:14px;color:#444}
.b{flex:1;display:flex;min-height:0}
.list{width:192px;overflow:hidden}
.sb{width:15px;background:#f1f1f1;display:flex;flex-direction:column;align-items:center;padding:5px 0 5px}
.th{width:11px;height:520px;background:#c1c1c1;margin-top:5px}
.ft{height:45px;border-top:1px solid #ccc;padding:6px 0 0 5px;color:#111;font-size:12px;flex:none}
.row{display:flex;align-items:center}
.pg{width:112px;height:7px;border:1px solid #3644e6;border-radius:3px;background:linear-gradient(90deg,#3644e6 10px,#fff 10px);margin-top:-2px}
.up{width:54px;height:19px;border-radius:2px;background:#3242da;border:1px solid #2733ad;color:#fff;font-size:10px;display:flex;align-items:center;justify-content:center;margin-left:15px}
`, `<div class="s"><div class="in">${S(14, 16, '<circle cx="8" cy="6" r="4.300" fill="none" stroke="#444" stroke-width="1.500"/><path d="M5.500 9.500L2 15" stroke="#444" stroke-width="1.800"/>')}${T(23, 'text', 'margin-left:4px')}${S(16, 16, '<path d="M1 1.500l14 13M15 1.500L1 14.500" stroke="#333" stroke-width="1.500"/>', 'style="margin-left:auto"')}</div></div>
<div class="b"><div class="list"><stencil-group name="Common" w="44" data="0"></stencil-group><stencil-group name="Navigation" w="51" data="1" h="23"></stencil-group><stencil-group name="iOS Components" w="83" h="22"></stencil-group><stencil-group name="Material Design" w="76" data="2" h="23"></stencil-group></div>
<div class="sb">${S(8, 5, '<path d="M0 5l4-4.500L8 5z" fill="#999"/>')}<div class="th"></div>${S(8, 5, '<path d="M0 0h8L4 4.500z" fill="#444"/>', 'style="margin-top:auto"')}</div></div>
<div class="ft">${T(135, 'Free plan: 25/300 objects', 'line-height:15px')}<div class="row">
<div class="pg"></div><div class="up">${T(37, 'Upgrade')}</div></div></div>`);

/* ---------- rulers and canvas ---------- */
let hr = '', vr = '';
for (let k = -17; k <= 88; k++) {
  const x = 562 + k * 12.5 - 324; if (x < 19) continue;
  const X = Math.floor(x) + .5, big = k % 10 === 0;
  hr += `<path d="M${X} ${big ? 0 : 14}V18" stroke="#c4c4c4"/>` + (big ? `<text x="${X+2.5}" y="10" font-size="10.500" fill="#999">${k*10}</text>` : '');
}
for (let k = 1; k <= 72; k++) {
  const y = 175 + k * 12.5 - 184; if (y > 896 || y < 1) continue;
  const Y = Math.floor(y) + .5, big = k % 10 === 0;
  vr += `<path d="M${big ? 0 : 14} ${Y}H18" stroke="#c4c4c4"/>` + (big ? `<text transform="translate(10 ${Y-3}) rotate(-90)" font-size="10.500" fill="#999">${k*10}</text>` : '');
}
define('ruler-top', `:host{height:19px;background:#fff;border-bottom:1px solid #c8c8c8}`, S(1336, 18, hr, 'font-family="Liberation Sans"'));
define('ruler-left', `:host{width:19px;background:#fff;border-right:1px solid #c8c8c8;flex:none}`, S(18, 896, vr, 'font-family="Liberation Sans"'));

const at = (x, base, f, w, s, css = '') => `<div class="a" style="left:${x-343}px;top:${(base-184-.905*f-(20-1.117*f)/2).toFixed(1)}px">${T(w, s, `font-size:${f}px;line-height:20px;${css}`)}</div>`;
const rc = (x, y, w, h) => `<div class="a r" style="left:${x-343}px;top:${y-184}px;width:${w}px;height:${h}px"></div>`;
const bt = (x, y, w, h, lines) => `<div class="a bt" style="left:${x-343}px;top:${y-184}px;width:${w}px;height:${h}px"><div>${lines.map(l => T(l[1], l[0])).join('')}</div></div>`;
const song = (x, y, d, op) => rc(x, y, 218, 60) + at(x+6, y+19, 15, 45, 'Lorem', 'font-weight:700') + at(x+6, y+38-d, 15, 88, 'Ipsum Singer') + (op === '+'
  ? at(x+186.5, y+40, 31, 0, '+') : at(x+184, y+39.5, 29, 0, '-', 'font-weight:700'));
define('wire-canvas', `
:host{flex:1;position:relative;background:#ececec;overflow:hidden;color:#000}
.a{position:absolute}
.page{left:218px;top:0;width:702px;height:867px;background:#fff;border:1px solid #dcdcdc;border-top:0}
.r{background:#fff;border:1px solid #111;box-shadow:inset 0 0 0 .5px #777}
.bt{background:#e4e4e4;border:1px solid #222;border-radius:5px;overflow:hidden;font-size:12.500px;box-shadow:inset 0 0 0 .5px #555}
.bt>div{display:flex;flex-direction:column;align-items:center;line-height:18px;margin-top:-1px}
.se{border:1px solid #777;border-radius:15px;background:#fff}
.vs{left:1302px;top:0;width:15px;height:881px;background:#f0f0f0}
.vs i,.hs i{position:absolute;background:#c1c1c1}
.hs{left:0;bottom:0;width:1317px;height:15px;background:#f0f0f0}
`, `<div class="a page"></div>
${at(832, 228, 32.5, 158, 'Jammming')}
<div class="a se" style="left:444px;top:72px;width:251px;height:30px">${S(24, 26, '<circle cx="15" cy="12.500" r="6.800" fill="none" stroke="#444" stroke-width="2"/><path d="M20 17.500l6.500 7" stroke="#444" stroke-width="2.600"/>', 'overflow="visible"')}</div>
${at(819, 277, 17.5, 70, 'Search...', 'color:#b8b8b8')}
${bt(853, 303, 120, 32, [['Search Song', 73]]).replace('<div><fit', '<div style="padding-top:6px"><fit')}
${rc(638, 359, 241, 281)}${at(647, 383, 17.5, 58, 'Results')}${song(649.5, 394, 0, '+')}${song(649.5, 458, 0, '+')}
${rc(945, 359, 241, 281)}${at(956, 383, 17.5, 95, 'New Playlist')}${song(956, 394, 0, '-')}${song(956, 458, 0, '-')}${song(956, 521.5, .5, '-')}
${bt(962, 591, 89, 33, [['Save to', 42], ['Spotify', 39]])}${bt(1072, 591, 89, 33, [['Find', 24], ['Concerts', 50]])}
${rc(792, 698, 241, 281)}${at(801, 721, 17.5, 154, 'Upcoming Concerts')}
${rc(803, 735, 219, 60)}${at(809, 754, 15, 56, 'Wacken', 'font-weight:700')}${at(809, 773, 15, 105, 'New York - Rob')}${bt(944, 751, 68, 33, [['Book', 28], ['Now', 25]])}
${rc(803, 801, 219, 60)}${at(809, 821, 15, 103, 'Tomorrowland', 'font-weight:700')}${at(809, 839, 15, 123, 'Yesterday - Future')}${bt(944, 815, 68, 33, [['Book', 28], ['Now', 25]])}
<div class="a vs"><i style="left:2px;top:275px;width:11px;height:337px"></i>${S(15, 881, '<path d="M3.500 10l4-4.500 4 4.500zM3.500 870h8l-4 4.500z" fill="#444"/>')}</div>
<div class="a hs"><i style="left:380px;top:2px;width:619px;height:11px"></i>${S(1317, 15, '<path d="M9 3.500v8L4.500 7.500zM1293 3.500v8l4.500-4z" fill="#444"/>')}</div>`);

/* ---------- right panel ---------- */
const al = [
'<path d="M1 1v13" stroke="#b5b5b5"/><rect x="2.500" y="2" width="6" height="5" fill="#d3d0d0"/><rect x="2.500" y="8" width="11" height="5" fill="#999"/>',
'<path d="M7 1v13" stroke="#b5b5b5"/><rect x="4" y="2" width="6" height="5" fill="#d3d0d0"/><rect x="1" y="8" width="12" height="5" fill="#999"/>',
'<path d="M13 1v13" stroke="#b5b5b5"/><rect x="6" y="2" width="6" height="5" fill="#d3d0d0"/><rect x="1" y="8" width="11" height="5" fill="#999"/>',
'<path d="M1 1.500h13" stroke="#b5b5b5"/><rect x="2.500" y="3" width="4.500" height="11" fill="#999"/><rect x="8" y="3" width="4.500" height="6" fill="#d3d0d0"/>',
'<path d="M1 7.500h13" stroke="#b5b5b5"/><rect x="2.500" y="2" width="4.500" height="11" fill="#999"/><rect x="8" y="4.500" width="4.500" height="6" fill="#d3d0d0"/>',
'<path d="M1 13.500h13" stroke="#b5b5b5"/><rect x="2.500" y="2" width="4.500" height="11" fill="#999"/><rect x="8" y="7" width="4.500" height="6" fill="#d3d0d0"/>',
'<path d="M3.500 1v13M11 1v13" stroke="#b5b5b5"/><rect x="1.500" y="3" width="4" height="9" fill="#999"/><rect x="9" y="4.500" width="4" height="6" fill="#d3d0d0"/>',
'<path d="M1 3.500h13M1 11.500h13" stroke="#b5b5b5"/><rect x="4" y="2" width="7" height="3.500" fill="#d3d0d0"/><rect x="2.500" y="9" width="10" height="5" rx="1" fill="#999"/>'];
const dd = S(10, 12, '<path d="M.5 1h9L5 11.500z" fill="#555"/>');
const pI = {
A: S(14, 15, '<path d="M4 10L7 1.500 10 10M5 7.500h4" fill="none" stroke="#777" stroke-width="1.300"/><rect x=".5" y="12" width="13" height="2.500" fill="#b9b3b0"/>'),
fill: S(14, 15, '<path d="M4 1.500l6 5-4.500 4L2 7l4-4" fill="none" stroke="#666" stroke-width="1.200"/><path d="M2.500 6.500h7.500l-4.500 4z" fill="#666"/><circle cx="11.500" cy="9.500" r="1.300" fill="#666"/><rect x=".5" y="12" width="13" height="2.500" fill="#b9b3b0"/>'),
pen: S(14, 15, '<path d="M2.500 10.500v-2.500L9 1.500l2.500 2.500L5 10.500z" fill="#666"/><path d="M8 2.500L10.500 5" stroke="#fff" stroke-width=".7"/><rect x=".5" y="12.500" width="13" height="2" fill="#b9b3b0"/>'),
tt: S(13, 12, '<path d="M4 2h8M8.500 2v9M0 5.500h6M3 5.500v5.500" fill="none" stroke="#777" stroke-width="2"/>'),
dots: S(14, 8, '<path d="M.5 5.500h2" stroke="#999"/><circle cx="4.500" cy="5" r="1.200" fill="#777"/><rect x="6.500" y="3.500" width="2.800" height="3" fill="#777"/><rect x="10" y="3" width="3.500" height="3.500" fill="#666"/>'),
solid: S(13, 12, '<path d="M0 2h13" stroke="#999" stroke-width="2"/><path d="M0 5.500h13" stroke="#999"/><path d="M0 8.500h13M0 10.800h13" stroke="#999" stroke-dasharray="2 1"/>')
};
const hl = (rows, y0 = 1) => S(13, 14, rows.map((r, i) => `<path d="M${r[0]} ${y0 + i*2.4 + .8}h${r[1]}" stroke="#333" stroke-width="1.400"/>`).join(''));
const bI = {
B: S(13, 14, '<text x="6.500" y="11" text-anchor="middle" font-size="11" font-weight="700" font-family="Liberation Sans" fill="#333">B</text>'),
I: S(13, 14, '<path d="M5 3h6M2.500 11h6M8 3L5.500 11" stroke="#333" stroke-width="1.800"/>'),
U: S(13, 14, '<path d="M3.500 1.500v5a3 3 0 0 0 6 0v-5M2 12h9" fill="none" stroke="#333" stroke-width="1.500"/>'),
K: S(13, 14, '<path d="M2.500 3.500h8M6.500 3v9" stroke="#333" stroke-width="2"/><path d="M0 7h13" stroke="#777" stroke-width="1.800"/>'),
l: hl([[0,12],[0,8],[0,12],[0,8],[0,12]]), c: hl([[1,11],[3,7],[1,11],[3,7],[1,11]]), r: hl([[1,11],[5,7],[1,11],[5,7],[1,11]]), j: hl([[1,11],[1,11],[1,11],[1,11],[1,11]]),
t: S(13, 14, '<path d="M1.500 2h10M6.500 13V5.500M4.500 7l2-2.500 2 2.500" fill="none" stroke="#333" stroke-width="1.300"/>'),
m: S(13, 14, '<path d="M1.500 7h10" stroke="#333" stroke-width="1.300"/><path d="M6.500 0v4M6.500 14v-4" stroke="#333"/><path d="M4.500 3h4l-2 2.500zM4.500 11h4l-2-2.500z" fill="#333"/>'),
b: S(13, 14, '<path d="M1.500 12.500h10M6.500 1.500V9M4.500 7.500l2 2.500 2-2.500" fill="none" stroke="#333" stroke-width="1.300"/>'),
g: S(14, 14, gear(7,7,6,'#333','#f4f4f4'))
};
const sel = (w, inner) => `<div class="sel" style="width:${w}px"><div class="v">${inner}</div><div class="d">${dd}</div></div>`;
const clr = (w, icon, n = 1) => `<div class="clr" style="width:${w}px"><div class="ic">${pI[icon]}</div>${'<div class="q">?</div>'.repeat(n)}</div>`;
const seg = (...k) => `<div class="seg">${k.map(i => `<div>${bI[i]}</div>`).join('')}</div>`;
const line2 = `<div class="row" style="height:25px;margin-top:7px">${sel(114, `${pI.dots}<span class="u">PT</span>`)}${sel(114, `${pI.solid}${T(28.5, 'Solid', 'margin-left:3px;font-size:13px')}`)}</div>`;
define('format-panel', `
:host{width:260px;background:#f4f4f4;border-left:1px solid #ccc;flex:none;font-size:12px;color:#6a6a6a}
.al{height:30px;display:flex;gap:17.300px;padding:7px 0 0 9px;border-bottom:1px solid #dedede}
.h{height:24px;background:#fff;border-bottom:1px solid #d8d8d8;padding:0 10px;font-size:10px;color:#555;display:flex;align-items:center;justify-content:space-between}
.h.t{border-top:1px solid #d8d8d8;padding-top:1px}
.h.n{padding-top:1px}
.h.off{background:#ebebeb;color:#888}
.card{margin:13px 13px;height:94px;background:#fff;padding:12px 13px 0;line-height:16px}
.sec{padding:13px 12px 13px 13px}
.row{display:flex;justify-content:space-between}
.sel{height:25px;border:1px solid #b4b4b4;border-radius:3px;background:#fff;display:flex;font-size:14px;color:#999}
.sel .v{flex:1;display:flex;align-items:center;padding:0 4px 1px 4px}
.sel .d{width:21px;border-left:1px solid #b4b4b4;display:flex;align-items:center;justify-content:center;padding:3px 1px 0 0}
.u{margin-left:auto;margin-right:2px;font-size:8px;color:#bbb;padding-top:3px}
.clr{height:25px;border:1px solid #b4b4b4;border-radius:3px;background:#fff;display:flex;padding:1px;gap:1px}
.ic{width:21px;padding:4px 0 0 2px}
.q{flex:1;border:1px solid #ccc;display:flex;align-items:center;justify-content:center;font-size:10px;font-weight:700;color:#888}
.seg{width:231px;height:22px;border:1px solid #ccc;border-radius:3px;display:flex;margin-top:7px}
.seg>div{flex:1;display:flex;align-items:center;justify-content:center;padding-right:1px}
.seg>div+div{border-left:1px solid #ccc}
`, `<div class="al">${al.map(a => S(15, 15, a)).join('')}</div>
<div class="h" style="height:23px">${T(83, 'DEFAULT STYLES')}</div>
<div class="card">${T(167, "You're in Default Styles mode.", 'font-weight:700')}${T(194, 'Any style you pick now will be applied')}${T(199, 'to all new objects you add to the page.')}${T(99, 'Clear default styles', 'color:#3f4be8;margin-top:6px')}</div>
<div class="h t" style="height:25px">${T(25, 'TEXT')}</div>
<div class="sec" style="height:170px"><div class="row" style="height:26px">${sel(147, T(63, 'Font family', 'margin-left:2px;font-size:13.500px'))}${sel(81, T(25, 'None', 'font-size:11px;margin-top:-1px'))}</div>
<div class="row" style="margin-top:6px">${clr(126, 'A')}${sel(100, `${pI.tt}<span class="u">PX</span>`)}</div>
${seg('B', 'I', 'U', 'K')}${seg('l', 'c', 'r', 'j')}${seg('t', 'm', 'b', 'g')}</div>
<div class="h t" style="height:25px">${T(84, 'FILLS &amp; STROKES')}</div>
<div class="sec" style="height:114px">${clr(234, 'fill', 2)}<div style="height:6px"></div>${clr(234, 'pen')}${line2}</div>
<div class="h off t" style="height:24px">${T(100, 'ROUNDED CORNERS')}${T(12, '[+]')}</div>
<div class="h n" style="height:24px">${T(69, 'CONNECTORS')}</div>
<div class="sec" style="height:115px;border-bottom:1px solid #d8d8d8">${clr(234, 'pen')}<div style="margin-top:-1px">${line2}</div><div class="row" style="margin-top:7px">${sel(73, T(28.5, 'Style', 'margin-left:2px;font-size:13px'))}${sel(73, T(27.5, 'Start', 'margin-left:2px;font-size:13px'))}${sel(73, T(23, 'End', 'margin-left:2px;font-size:13px'))}</div></div>`);

/* ---------- page ---------- */
define('desktop-shell', `
:host{display:flex;flex-direction:column}
.m{display:flex;flex:1;min-height:0}
.w{flex:1;display:flex;flex-direction:column;min-width:0}
.e{flex:1;display:flex;min-height:0}
.c{flex:1;display:flex;flex-direction:column;min-width:0}
.cc{flex:1;display:flex;min-height:0}
`, `<os-bar></os-bar><div class="m"><app-launcher></app-launcher><div class="w"><tab-strip></tab-strip><nav-bar></nav-bar><bookmark-bar></bookmark-bar><editor-header></editor-header>
<div class="e"><side-rail></side-rail><stencil-panel></stencil-panel><div class="c"><ruler-top></ruler-top><div class="cc"><ruler-left></ruler-left><wire-canvas></wire-canvas></div></div><format-panel></format-panel></div></div></div>`);

fitted.filter(f => f.isConnected).forEach(f => {
  const s = f.shadowRoot.querySelector('slot').assignedNodes({ flatten: true });
  if (!f.textContent.trim()) {
    const n = s.map(x => x.textContent).join('').length - 1, sp = f.shadowRoot.querySelector('span');
    const w = parseFloat(f.getAttribute('w')); sp.style.letterSpacing = ((w - sp.getBoundingClientRect().width) / n).toFixed(3) + 'px';
  } else f.fit();
});
</script>
</body>
</html>
